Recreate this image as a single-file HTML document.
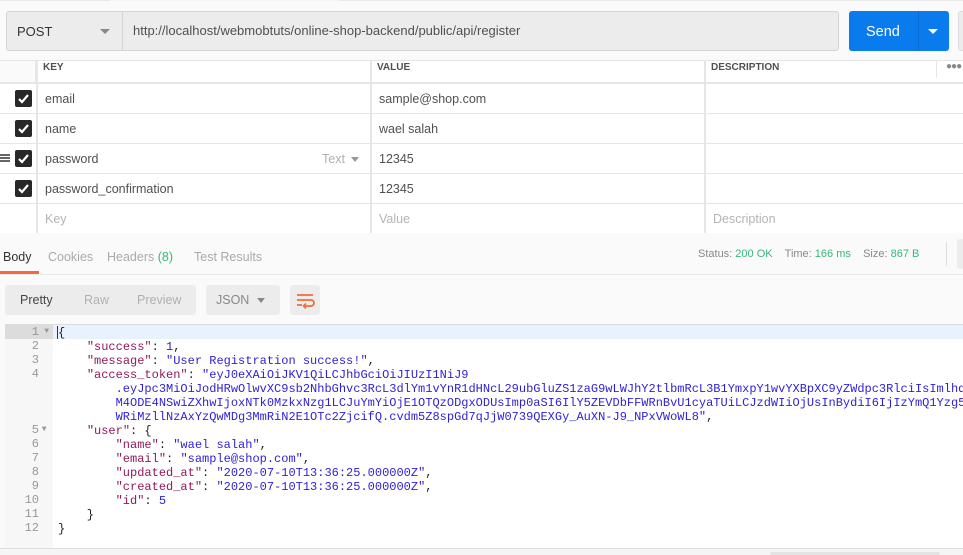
<!DOCTYPE html>
<html><head><meta charset="utf-8"><style>
*{margin:0;padding:0;box-sizing:border-box}
body{width:963px;height:555px;overflow:hidden;background:#fafafa;font-family:"Liberation Sans",sans-serif;position:relative;color:#505050}
.a{position:absolute}
.cell{position:absolute;background:#fff;font-size:12.5px;color:#505050;line-height:31px;padding-left:7px;white-space:nowrap;overflow:hidden}
.hd{font-size:10px;font-weight:bold;color:#505050;line-height:16px}
.cb{position:absolute;left:15px;width:17px;height:17px;background:#282828;border-radius:2px}
.cb svg{position:absolute;left:2px;top:3px}
.code{position:absolute;left:53px;top:325px;width:910px;font-family:"Liberation Mono",monospace;font-size:12px;line-height:14px;white-space:pre;color:#222;padding-left:5px}
.gut{position:absolute;left:5px;top:325px;width:48px;height:223px;background:#f7f7f7;font-family:"Liberation Mono",monospace;font-size:12px;line-height:14px;color:#999;text-align:right}
.k{color:#92195a}.s{color:#2e1fd6}.n{color:#2e1fd6}
</style></head><body>
<div class="a" style="left:0;top:0;width:963px;height:1px;background:#e8e8e8"></div>
<div class="a" style="left:110px;top:0;width:230px;height:1px;background:#f5f5f5"></div>
<div class="a" style="left:6px;top:11px;width:833px;height:40px;background:#ececec;border:1px solid #d4d4d4;border-radius:3px"></div>
<div class="a" style="left:122px;top:12px;width:1px;height:38px;background:#d4d4d4"></div>
<div class="a" style="left:17px;top:24px;font-size:13px;color:#333">POST</div>
<div class="a" style="left:100px;top:29px;border-left:5px solid transparent;border-right:5px solid transparent;border-top:5px solid #888"></div>
<div class="a" style="left:133px;top:23px;font-size:13px;color:#505050">http://localhost/webmobtuts/online-shop-backend/public/api/register</div>
<div class="a" style="left:849px;top:11px;width:100px;height:40px;background:#097bed;border-radius:3px"></div>
<div class="a" style="left:918px;top:11px;width:1px;height:40px;background:#0a6ccf"></div>
<div class="a" style="left:866px;top:24px;font-size:14.5px;color:#fff">Send</div>
<div class="a" style="left:928px;top:29px;border-left:5px solid transparent;border-right:5px solid transparent;border-top:5px solid #fff"></div>
<div class="a" style="left:958px;top:11px;width:8px;height:40px;background:#ececec;border:1px solid #ddd;border-radius:3px"></div>
<div class="a" style="left:0;top:60px;width:963px;height:175px;background:#e6e6e6"></div>
<div class="a" style="left:0;top:61px;width:35px;height:21px;background:#fafafa"></div>
<div class="cell hd" style="left:38px;top:61px;width:332px;height:21px;padding-left:5px;line-height:14px">KEY</div>
<div class="cell hd" style="left:372px;top:61px;width:332px;height:21px;padding-left:5px;line-height:14px">VALUE</div>
<div class="cell hd" style="left:706px;top:61px;width:257px;height:21px;padding-left:5px;line-height:14px">DESCRIPTION</div>
<div class="a" style="left:936px;top:61px;width:1px;height:17px;background:#e6e6e6"></div>
<div class="a" style="left:946px;top:61px;font-size:10px;color:#888;letter-spacing:-1px">●●●</div>

<div class="cell" style="left:0;top:84px;width:36px;height:29px;padding:0"><div class="cb" style="top:6px"><svg width="13" height="11"><path d="M2 6l3 3 6-7" stroke="#fff" stroke-width="2.2" fill="none"/></svg></div></div>
<div class="cell" style="left:38px;top:84px;width:332px;height:29px">email</div>
<div class="cell" style="left:372px;top:84px;width:332px;height:29px">sample@shop.com</div>
<div class="cell" style="left:706px;top:84px;width:257px;height:29px"></div>

<div class="cell" style="left:0;top:114px;width:36px;height:29px;padding:0"><div class="cb" style="top:6px"><svg width="13" height="11"><path d="M2 6l3 3 6-7" stroke="#fff" stroke-width="2.2" fill="none"/></svg></div></div>
<div class="cell" style="left:38px;top:114px;width:332px;height:29px">name</div>
<div class="cell" style="left:372px;top:114px;width:332px;height:29px">wael salah</div>
<div class="cell" style="left:706px;top:114px;width:257px;height:29px"></div>

<div class="cell" style="left:0;top:144px;width:36px;height:29px;padding:0"><div class="cb" style="top:6px"><svg width="13" height="11"><path d="M2 6l3 3 6-7" stroke="#fff" stroke-width="2.2" fill="none"/></svg></div>
<div class="a" style="left:0;top:10px;width:10px;height:1.5px;background:#666;box-shadow:0 3px 0 #666,0 6px 0 #666"></div></div>
<div class="cell" style="left:38px;top:144px;width:332px;height:29px">password<span class="a" style="left:284px;top:0;color:#b0b0b0">Text</span><span class="a" style="left:313px;top:13px;border-left:4px solid transparent;border-right:4px solid transparent;border-top:5px solid #999"></span></div>
<div class="cell" style="left:372px;top:144px;width:332px;height:29px">12345</div>
<div class="cell" style="left:706px;top:144px;width:257px;height:29px"></div>

<div class="cell" style="left:0;top:174px;width:36px;height:29px;padding:0"><div class="cb" style="top:6px"><svg width="13" height="11"><path d="M2 6l3 3 6-7" stroke="#fff" stroke-width="2.2" fill="none"/></svg></div></div>
<div class="cell" style="left:38px;top:174px;width:332px;height:29px">password_confirmation</div>
<div class="cell" style="left:372px;top:174px;width:332px;height:29px">12345</div>
<div class="cell" style="left:706px;top:174px;width:257px;height:29px"></div>

<div class="cell" style="left:0;top:204px;width:36px;height:29px"></div>
<div class="cell" style="left:38px;top:204px;width:332px;height:29px;color:#b4b4b4">Key</div>
<div class="cell" style="left:372px;top:204px;width:332px;height:29px;color:#b4b4b4">Value</div>
<div class="cell" style="left:706px;top:204px;width:257px;height:29px;color:#b4b4b4">Description</div>

<div class="a" style="left:0;top:233px;width:963px;height:41px;background:#fafafa"></div>
<div class="a" style="left:3px;top:250px;font-size:12.5px;color:#333">Body</div>
<div class="a" style="left:48px;top:250px;font-size:12.5px;color:#aaa">Cookies</div>
<div class="a" style="left:107px;top:250px;font-size:12.5px;color:#aaa">Headers <span style="color:#3ab77b">(8)</span></div>
<div class="a" style="left:194px;top:250px;font-size:12.5px;color:#aaa">Test Results</div>
<div class="a" style="left:0;top:271px;width:39px;height:3px;background:#f26b3a"></div>
<div class="a" style="left:0;top:274px;width:963px;height:1px;background:#e8e8e8"></div>
<div class="a" style="left:698px;top:248px;font-size:11px;color:#888;white-space:nowrap">Status: <span style="color:#3ab77b">200 OK</span>&nbsp;&nbsp;&nbsp; Time: <span style="color:#3ab77b">166 ms</span>&nbsp;&nbsp;&nbsp; Size: <span style="color:#3ab77b">867 B</span></div>
<div class="a" style="left:946px;top:242px;width:1px;height:24px;background:#ddd"></div>
<div class="a" style="left:957px;top:239px;width:8px;height:30px;background:#ececec;border-radius:3px"></div>

<div class="a" style="left:5px;top:285px;width:191px;height:30px;background:#ececec;border-radius:3px"></div>
<div class="a" style="left:20px;top:293px;font-size:12.5px;color:#444">Pretty</div>
<div class="a" style="left:84px;top:293px;font-size:12.5px;color:#b0b0b0">Raw</div>
<div class="a" style="left:137px;top:293px;font-size:12.5px;color:#b0b0b0">Preview</div>
<div class="a" style="left:206px;top:285px;width:74px;height:30px;background:#ececec;border-radius:3px"></div>
<div class="a" style="left:216px;top:293px;font-size:12.5px;color:#888">JSON</div>
<div class="a" style="left:257px;top:298px;border-left:4px solid transparent;border-right:4px solid transparent;border-top:5px solid #888"></div>
<div class="a" style="left:290px;top:285px;width:30px;height:30px;background:#ececec;border-radius:3px">
<svg width="30" height="30"><path d="M7 10h16M7 15h14a3 3 0 0 1 0 6h-6M7 20h5" stroke="#f26b3a" stroke-width="1.8" fill="none"/><path d="M16 18.5l-2.5 2.5 2.5 2.5" stroke="#f26b3a" stroke-width="1.6" fill="none"/></svg></div>

<div class="a" style="left:5px;top:324px;width:958px;height:224px;background:#fff;border-top:1px solid #ddd;border-left:1px solid #ddd"></div>
<div class="gut"><div style="background:#dcdcdc;padding-right:14px;position:relative">1<span style="font-size:8px;position:absolute;right:4px">▼</span></div><div style="padding-right:14px">2<br>3<br>4<br><br><br><br><span style="position:relative">5<span style="font-size:8px;position:absolute;left:10px">▼</span></span><br>6<br>7<br>8<br>9<br>10<br>11<br>12</div></div>
<div class="a" style="left:53px;top:325px;width:910px;height:14px;background:#e8f2fe"></div>
<div class="a" style="left:57px;top:326px;width:1px;height:13px;background:#333"></div>
<div class="code" style="overflow:hidden;height:223px;top:326px">{
    <span class="k">"success"</span>: <span class="n">1</span>,
    <span class="k">"message"</span>: <span class="s">"User Registration success!"</span>,
    <span class="k">"access_token"</span>: <span class="s">"eyJ0eXAiOiJKV1QiLCJhbGciOiJIUzI1NiJ9</span>
<span class="s">        .eyJpc3MiOiJodHRwOlwvXC9sb2NhbGhvc3RcL3dlYm1vYnR1dHNcL29ubGluZS1zaG9wLWJhY2tlbmRcL3B1YmxpY1wvYXBpXC9yZWdpc3RlciIsImlhdCI6</span>
<span class="s">        M4ODE4NSwiZXhwIjoxNTk0MzkxNzg1LCJuYmYiOjE1OTQzODgxODUsImp0aSI6IlY5ZEVDbFFWRnBvU1cyaTUiLCJzdWIiOjUsInBydiI6IjIzYmQ1Yzg5</span>
<span class="s">        WRiMzllNzAxYzQwMDg3MmRiN2E1OTc2ZjcifQ.cvdm5Z8spGd7qJjW0739QEXGy_AuXN-J9_NPxVWoWL8"</span>,
    <span class="k">"user"</span>: {
        <span class="k">"name"</span>: <span class="s">"wael salah"</span>,
        <span class="k">"email"</span>: <span class="s">"sample@shop.com"</span>,
        <span class="k">"updated_at"</span>: <span class="s">"2020-07-10T13:36:25.000000Z"</span>,
        <span class="k">"created_at"</span>: <span class="s">"2020-07-10T13:36:25.000000Z"</span>,
        <span class="k">"id"</span>: <span class="n">5</span>
    }
}</div>
<div class="a" style="left:0;top:548px;width:963px;height:7px;background:#f5f5f5;border-top:1px solid #ddd"></div>
<div class="a" style="left:770px;top:552px;width:170px;height:3px;background:#e4e4e4;border-radius:2px"></div>
</body></html>
